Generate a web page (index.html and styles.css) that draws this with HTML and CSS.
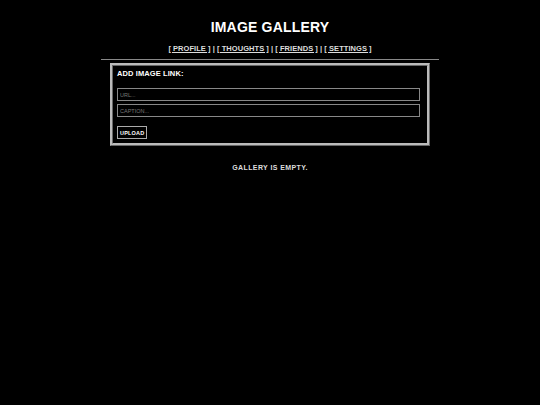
FILE: index.html
```html
<!DOCTYPE html>
<html>
<head>
<meta charset="utf-8">
<link rel="stylesheet" href="styles.css">
</head>
<body>
<div class="page">
  <h1 class="title">IMAGE GALLERY</h1>
  <nav class="nav">
    <a href="#">[ PROFILE ]</a> | <a href="#">[ THOUGHTS ]</a> | <a href="#">[ FRIENDS ]</a> | <a href="#">[ SETTINGS ]</a>
  </nav>
  <hr class="rule">
  <div class="box">
    <div class="box-title">ADD IMAGE LINK:</div>
    <input class="field" type="text" placeholder="URL...">
    <input class="field" type="text" placeholder="CAPTION...">
    <button class="btn">UPLOAD</button>
  </div>
  <p class="empty">GALLERY IS EMPTY.</p>
</div>
</body>
</html>
```
FILE: styles.css
```css
html, body {
  margin: 0;
  padding: 0;
  background: #000;
  color: #fff;
  font-family: "Liberation Sans", Arial, sans-serif;
}
.page {
  width: 338px;
  margin: 0 auto;
  padding-top: 19px;
}
.title {
  margin: 0;
  text-align: center;
  font-size: 14px;
  font-weight: bold;
  letter-spacing: 0.2px;
  line-height: 16px;
}
.nav {
  margin-top: 9px;
  text-align: center;
  font-size: 7.5px;
  font-weight: bold;
  letter-spacing: 0.05px;
  color: #ddd;
  line-height: 9px;
}
.nav a {
  color: #ddd;
  text-decoration: underline;
}
.rule {
  margin: 6px 0 0;
  border: 0;
  border-top: 1px solid #888;
  height: 0;
}
.box {
  margin: 3px 9px 0;
  border: 3px ridge #bbb;
  padding: 3px 4px 4px;
  display: flex;
  flex-direction: column;
  align-items: flex-start;
}
.box-title {
  font-size: 7.5px;
  font-weight: bold;
  letter-spacing: 0.1px;
  line-height: 9px;
  margin-bottom: 10px;
}
.field {
  box-sizing: border-box;
  width: 303px;
  height: 13px;
  margin: 0 0 3px;
  padding: 0 2px;
  background: #000;
  border: 1px solid #888;
  color: #fff;
  font-family: "Liberation Sans", Arial, sans-serif;
  font-size: 5.5px;
  outline: none;
}
.field::placeholder {
  color: #777;
}
.btn {
  margin-top: 6px;
  box-sizing: border-box;
  height: 13px;
  padding: 0 2px;
  background: #000;
  color: #fff;
  border: 1px solid #aaa;
  font-family: "Liberation Sans", Arial, sans-serif;
  font-size: 5.5px;
  font-weight: bold;
  letter-spacing: 0.2px;
}
.empty {
  margin: 18px 0 0;
  text-align: center;
  font-size: 7px;
  font-weight: bold;
  letter-spacing: 0.4px;
  color: #ddd;
}
```
